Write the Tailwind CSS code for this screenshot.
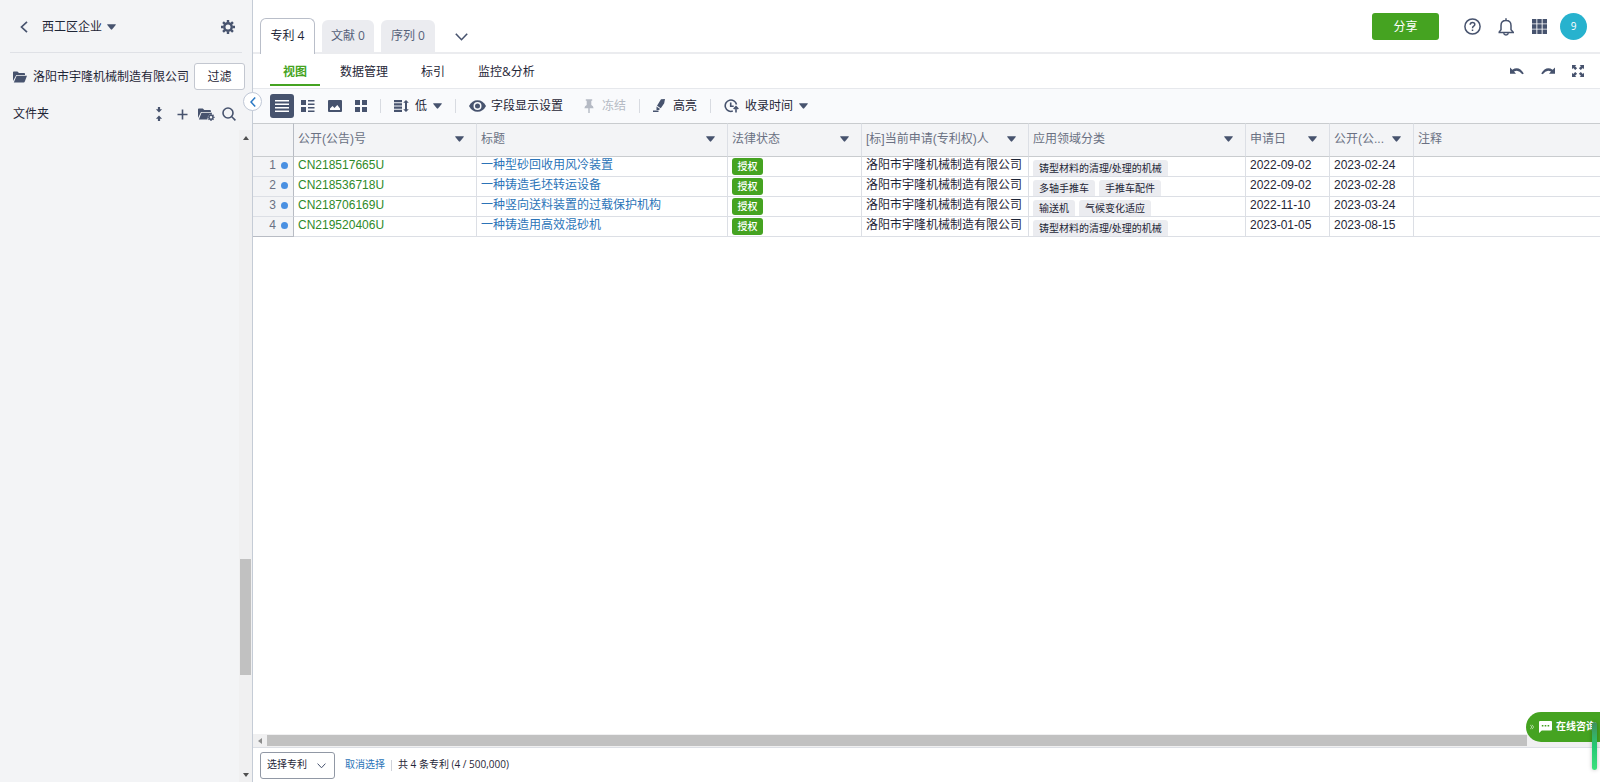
<!DOCTYPE html>
<html lang="zh-CN">
<head>
<meta charset="utf-8">
<title>西工区企业</title>
<script src="https://cdn.jsdelivr.net/npm/@tailwindcss/browser@4"></script>
</head>
<body class="font-['Open_Sans','Noto_Sans_CJK_SC',sans-serif] text-xs text-[#1f2637]">
<svg class="hidden">
  <symbol id="caret" viewBox="0 0 9 6"><path d="M.6.2h7.8q.8.2.3.9L5.2 5.3q-.7.7-1.4 0L.3 1.1Q-.2.4.6.2z" fill="#47536e"/></symbol>
</svg>
<div class="flex h-screen overflow-hidden">

  <aside class="relative flex w-[253px] shrink-0 flex-col border-r border-[#c5ccd6] bg-[#f3f4f6]">
    <header class="mx-[10px] flex h-[53px] shrink-0 items-center border-b border-[#dfe1e6] pt-[2px] pr-[7px] pl-[10px]">
      <button class="mr-[14px]" aria-label="返回"><svg width="8" height="12" viewBox="0 0 8 12" fill="none" stroke="#47536e" stroke-width="1.7"><path d="M7 .8 1.5 6 7 11.2"/></svg></button>
      <button class="flex items-center gap-[5px] leading-4">西工区企业<svg width="9" height="6"><use href="#caret"/></svg></button>
      <button class="ml-auto" aria-label="设置"><svg width="14" height="14" viewBox="0 0 14 14"><circle cx="7" cy="7" r="3.7" fill="none" stroke="#47536e" stroke-width="2.4"/><g stroke="#47536e" stroke-width="2.4"><path d="M7 0v2.6M7 11.4V14M0 7h2.6M11.4 7H14M2.05 2.05l1.8 1.8M10.15 10.15l1.8 1.8M2.05 11.95l1.8-1.8M10.15 3.85l1.8-1.8"/></g></svg></button>
    </header>
    <div class="mt-[10px] flex h-[27px] shrink-0 items-center pr-[7px] pl-[13px]">
      <svg class="mr-[6px] shrink-0" width="14" height="12" viewBox="0 0 14 12" fill="#47536e"><path d="M0 10V1.2Q0 .5.8.5h3.6L6 2h5.2q.8 0 .8.8V4H3.3z"/><path d="M3.6 4.8H14l-2.3 6q-.3.7-1 .7H.8z"/></svg>
      <span class="whitespace-nowrap">洛阳市宇隆机械制造有限公司</span>
      <button class="ml-auto h-[27px] w-[51px] shrink-0 rounded-[3px] border border-[#c3c7d0] bg-white">过滤</button>
    </div>
    <div class="mt-[11px] flex h-[26px] shrink-0 items-center pr-4 pl-[13px]">
      <span class="mr-auto">文件夹</span>
      <button class="mr-[14px]" aria-label="折叠"><svg width="8" height="14" viewBox="0 0 8 14" fill="#47536e"><path d="M2.900 0h2.200v2.300h2L4 5.600l-3.100-3.300h2zM2.900 14h2.200v-2.300h2L4 8.400l-3.100 3.300h2z"/></svg></button>
      <button class="mr-[10px]" aria-label="新建"><svg width="11" height="11" viewBox="0 0 11 11" stroke="#47536e" stroke-width="1.6"><path d="M5.5.5v10M.5 5.5h10"/></svg></button>
      <button class="mr-[7px]" aria-label="文件夹设置"><svg width="17" height="13" viewBox="0 0 17 13"><path d="M0 10V1.3Q0 .5.8.5h4L6.3 2H12q.9 0 .9.8V4H3z" fill="#47536e"/><path d="M3.5 4.8H14v1q-4.6.2-4.6 5.7H.9z" fill="#47536e"/><circle cx="13" cy="9.3" r="2" fill="none" stroke="#47536e" stroke-width="1.5"/><path d="M13 5.7V7M13 11.6v1.3M9.4 9.3h1.3M15.3 9.3h1.3M10.5 6.8l.9.9M14.6 10.9l.9.9M10.5 11.8l.9-.9M14.6 7.7l.9-.9" stroke="#47536e" stroke-width="1.3"/></svg></button>
      <button aria-label="搜索"><svg width="14" height="14" viewBox="0 0 14 14" fill="none" stroke="#47536e" stroke-width="1.6"><circle cx="6" cy="6" r="5"/><path d="m9.8 9.8 3.6 3.6"/></svg></button>
    </div>
    <div class="mt-[3px] flex w-[13px] flex-1 flex-col items-center self-end bg-[#f0f0f1]">
      <svg class="my-[6px]" width="6" height="4"><path d="M0 4 3 0l3 4z" fill="#505050"/></svg>
      <div class="flex-[414]"></div>
      <div class="w-[11px] flex-[117] bg-[#c1c1c1]"></div>
      <div class="flex-[93]"></div>
      <svg class="my-[5px]" width="6" height="4"><path d="M0 0h6L3 4z" fill="#505050"/></svg>
    </div>
    <button class="absolute top-[92px] -right-[10px] z-10 grid size-[19px] place-items-center rounded-full border border-[#c0c8d6] bg-white" aria-label="收起侧栏"><svg width="6" height="10" viewBox="0 0 6 10" fill="none" stroke="#2a78c4" stroke-width="1.5"><path d="M5.2.5 1 5l4.2 4.5"/></svg></button>
  </aside>

  <main class="flex min-w-0 flex-1 flex-col bg-white">
    <header class="flex h-[54px] shrink-0 items-end border-b-2 border-[#ebecef] pr-[13px] pl-[7px]">
      <nav class="flex items-end gap-[7px]">
        <button class="-mb-[2px] h-[36px] w-[55px] rounded-t-[6px] border border-b-0 border-[#b9bec9] bg-white pb-[2px]">专利 4</button>
        <button class="h-8 w-[52px] rounded-t-[6px] bg-[#ebecf0] text-[#56617a]">文献 0</button>
        <button class="h-8 w-[54px] rounded-t-[6px] bg-[#ebecf0] text-[#56617a]">序列 0</button>
        <button class="ml-[13px] pb-[11px]" aria-label="更多"><svg width="13" height="8" viewBox="0 0 13 8" fill="none" stroke="#47536e" stroke-width="1.6"><path d="M.8.8 6.5 6.7 12.2.8"/></svg></button>
      </nav>
      <div class="mb-[12px] ml-auto flex items-center">
        <button class="mr-[25px] h-[27px] w-[67px] rounded-[3px] bg-[#45a321] text-white">分享</button>
        <button class="mr-[17px]" aria-label="帮助"><svg width="17" height="17" viewBox="0 0 17 17" fill="none" stroke="#47536e" stroke-width="1.5"><circle cx="8.5" cy="8.5" r="7.6"/><path d="M6.2 6.8q0-2.3 2.3-2.3t2.3 2q0 1-1.1 1.7T8.5 10.2M8.5 11.4V13"/></svg></button>
        <button class="mr-[18px]" aria-label="通知"><svg width="16" height="18" viewBox="0 0 16 18" fill="none" stroke="#47536e" stroke-width="1.5"><path d="M.5 14.6h15L13 11.7V7.5Q13 2.6 8 2.6T3 7.5v4.2L.9 14.4M8 2.6V.3"/><path d="M5.7 15.2Q6 17 8 17t2.3-1.8" /></svg></button>
        <button class="mr-[13px]" aria-label="应用"><svg width="15" height="15" viewBox="0 0 15 15" fill="#47536e"><path d="M0 0h4.4v4.4H0zM5.3 0h4.4v4.4H5.3zM10.6 0H15v4.4h-4.4zM0 5.3h4.4v4.4H0zM5.3 5.3h4.4v4.4H5.3zM10.6 5.3H15v4.4h-4.4zM0 10.6h4.4V15H0zM5.3 10.6h4.4V15H5.3zM10.6 10.6H15V15h-4.4z"/></svg></button>
        <button class="size-[27px] rounded-full bg-[#27b2ce] text-[10px] text-white">9</button>
      </div>
    </header>

    <div class="flex h-[35px] shrink-0 items-center border-b border-[#e6e8ec] pr-4 pl-[17px]">
      <nav class="flex h-full gap-[7px] pb-[2px]">
        <button class="border-b-2 border-[#45a321] px-[13px] pt-[5px] font-semibold text-[#45a321]">视图</button>
        <button class="border-b-2 border-transparent px-[13px] pt-[5px]">数据管理</button>
        <button class="border-b-2 border-transparent px-[13px] pt-[5px]">标引</button>
        <button class="border-b-2 border-transparent px-[13px] pt-[5px]">监控&amp;分析</button>
      </nav>
      <div class="ml-auto flex items-center gap-[17px]">
        <button aria-label="撤销"><svg width="14" height="8" viewBox="0 0 14 8"><path d="M0 .5v6.300h6L4 4.600Q8.500 2 12.300 7.300l1.500-.9Q9 -1.500 2.300 2.700z" fill="#47536e"/></svg></button>
        <button aria-label="重做"><svg width="14" height="8" viewBox="0 0 14 8"><path d="M14 .5v6.300H8l2-2.200Q5.500 2 1.700 7.300L.2 6.400Q5 -1.500 11.700 2.700z" fill="#47536e"/></svg></button>
        <button aria-label="全屏"><svg width="12" height="12" viewBox="0 0 12 12" fill="#47536e"><path d="M0 0h4.300L3.100 1.200l2 2L3.200 5.100l-2-2L0 4.300zM12 0v4.300l-1.200-1.200-2 2-1.900-1.900 2-2L7.700 0zM0 12V7.700l1.200 1.200 2-2 1.900 1.900-2 2L4.300 12zM12 12H7.700l1.200-1.200-2-2 1.900-1.900 2 2L12 7.700z"/></svg></button>
      </div>
    </div>

    <div class="flex h-[34px] shrink-0 items-center bg-[#f9fafc] pl-[17px] whitespace-nowrap">
      <div class="flex items-center gap-[13px]">
        <button class="-mr-[6px] grid size-6 place-items-center rounded-[3px] bg-[#47536e]" aria-label="列表"><svg width="14" height="12" fill="#fff"><path d="M0 0h14v1.500H0zM0 3.500h14V5H0zM0 7h14v1.500H0zM0 10.500h14V12H0z"/></svg></button>
        <button aria-label="详细列表"><svg width="14" height="12" fill="#47536e"><path d="M0 0h5v5H0zM0 7h5v5H0zM7 0h6.500v1.500H7zM7 3.500h6.500V5H7zM7 7h6.500v1.500H7zM7 10.500h6.500V12H7z"/></svg></button>
        <button aria-label="图片"><svg width="14" height="12" viewBox="0 0 14 12"><rect width="14" height="12" rx="1" fill="#47536e"/><path d="M2 10V8.600L4.500 6l2 2 2.800-3L12 8.500V10z" fill="#fff"/></svg></button>
        <button aria-label="网格"><svg width="12" height="12" fill="#47536e"><path d="M0 0h5v5H0zM7 0h5v5H7zM0 7h5v5H0zM7 7h5v5H7z"/></svg></button>
      </div>
      <span class="mx-[13px] h-[14px] w-px bg-[#d8dbe1]"></span>
      <button class="flex items-center gap-[6px]"><svg width="15" height="12" viewBox="0 0 15 12" fill="#47536e"><path d="M0 0h8v2.200H0zM0 3.300h8v2.200H0zM0 6.600h8v2.200H0zM0 9.800h8V12H0z"/><path d="M11 2.800v6.400H9.200L12 12l2.800-2.800H13V2.800h1.800L12 0 9.200 2.800z"/></svg>低<svg width="9" height="6"><use href="#caret"/></svg></button>
      <span class="mx-[13px] h-[14px] w-px bg-[#d8dbe1]"></span>
      <button class="flex items-center gap-[5px]"><svg width="17" height="12" viewBox="0 0 17 12"><path d="M0 6Q3 .2 8.500.2T17 6q-3 5.800-8.500 5.800T0 6z" fill="#47536e"/><circle cx="8.500" cy="6" r="4" fill="#f9fafc"/><circle cx="8.500" cy="6" r="2.500" fill="#47536e"/></svg>字段显示设置</button>
      <button class="ml-[20px] flex items-center gap-[7px] text-[#b5bac4]" disabled><svg width="12" height="15" viewBox="0 0 12 15" fill="#b5bac4"><path d="M2.800.3h6.400v1.400H8.300V6q2.100.9 2.300 3.200H6.700V14H5.300V9.200H1.400Q1.600 6.900 3.700 6V1.700h-.9z"/></svg>冻结</button>
      <span class="mx-[13px] h-[14px] w-px bg-[#d8dbe1]"></span>
      <button class="flex items-center gap-[7px]"><svg width="13" height="14" viewBox="0 0 13 14" fill="#47536e"><path d="M8 .3 12 0 11.200 4.200 7.800 9.300 4 6.700zM3.500 7.400l3.600 2.500-1.300 1H3.500zM0 11.500h5.500V13H0z"/></svg>高亮</button>
      <span class="mx-[13px] h-[14px] w-px bg-[#d8dbe1]"></span>
      <button class="flex items-center gap-[6px]"><svg width="15" height="14" viewBox="0 0 15 14" fill="none" stroke="#47536e" stroke-width="1.600"><path d="M12.500 5.500A5.700 5.700 0 1 0 8.800 12.100M6.700 3.400v3.800h3M12 13.500V8M9.700 10 12 7.600 14.300 10"/></svg>收录时间<svg width="9" height="6"><use href="#caret"/></svg></button>
    </div>

    <div class="flex-1 overflow-hidden">
      <table class="w-full table-fixed border-separate border-spacing-0 font-['Liberation_Sans','Noto_Sans_CJK_SC',sans-serif] leading-[17px] whitespace-nowrap [&_td]:h-5 [&_td]:border-r [&_td]:border-b [&_td]:border-[#dcdfe5] [&_td]:p-0 [&_td]:pl-1 [&_td]:align-top [&_th]:h-[34px] [&_th]:border-y [&_th]:border-r [&_th]:border-y-[#c9cccf] [&_th]:border-r-[#dcdfe5] [&_th]:bg-[#f3f4f6] [&_th]:p-0 [&_th]:pr-3 [&_th]:pb-[2px] [&_th]:pl-1 [&_th]:text-left [&_th]:font-normal [&_th]:text-[#6a7183]">
        <colgroup><col class="w-[41px]"><col class="w-[183px]"><col class="w-[251px]"><col class="w-[134px]"><col class="w-[167px]"><col class="w-[217px]"><col class="w-[84px]"><col class="w-[84px]"><col></colgroup>
        <thead>
          <tr>
            <th class="border-r-[#b8bcc4]!"></th>
            <th><div class="flex items-center justify-between">公开(公告)号<svg width="9" height="6"><use href="#caret"/></svg></div></th>
            <th><div class="flex items-center justify-between">标题<svg width="9" height="6"><use href="#caret"/></svg></div></th>
            <th><div class="flex items-center justify-between">法律状态<svg width="9" height="6"><use href="#caret"/></svg></div></th>
            <th><div class="flex items-center justify-between">[标]当前申请(专利权)人<svg width="9" height="6"><use href="#caret"/></svg></div></th>
            <th><div class="flex items-center justify-between">应用领域分类<svg width="9" height="6"><use href="#caret"/></svg></div></th>
            <th><div class="flex items-center justify-between">申请日<svg width="9" height="6"><use href="#caret"/></svg></div></th>
            <th><div class="flex items-center justify-between">公开(公...<svg width="9" height="6"><use href="#caret"/></svg></div></th>
            <th class="border-r-0!">注释</th>
          </tr>
        </thead>
        <tbody>
          <tr>
            <td class="border-r-[#b8bcc4]! bg-[#f3f4f6] text-[#6a7183]"><div class="flex items-center justify-end gap-[5px] pr-[5px]">1<i class="size-[7px] rounded-full bg-[#4a90e2]"></i></div></td>
            <td><a href="#" class="text-[#2f8a2a]">CN218517665U</a></td>
            <td><a href="#" class="text-[#2b74b8]">一种型砂回收用风冷装置</a></td>
            <td><div class="mt-px h-[17px] w-[31px] rounded-[3px] bg-[#45a321] text-center text-[10px] font-medium text-white">授权</div></td>
            <td>洛阳市宇隆机械制造有限公司</td>
            <td><div class="flex h-[19px] gap-1 overflow-hidden pt-[3px] text-[10px] leading-[18px]"><span class="h-[18px] rounded-[3px] bg-[#ebecf0] px-[6px]">铸型材料的清理/处理的机械</span></div></td>
            <td>2022-09-02</td><td>2023-02-24</td><td class="border-r-0!"></td>
          </tr>
          <tr>
            <td class="border-r-[#b8bcc4]! bg-[#f3f4f6] text-[#6a7183]"><div class="flex items-center justify-end gap-[5px] pr-[5px]">2<i class="size-[7px] rounded-full bg-[#4a90e2]"></i></div></td>
            <td><a href="#" class="text-[#2f8a2a]">CN218536718U</a></td>
            <td><a href="#" class="text-[#2b74b8]">一种铸造毛坯转运设备</a></td>
            <td><div class="mt-px h-[17px] w-[31px] rounded-[3px] bg-[#45a321] text-center text-[10px] font-medium text-white">授权</div></td>
            <td>洛阳市宇隆机械制造有限公司</td>
            <td><div class="flex h-[19px] gap-1 overflow-hidden pt-[3px] text-[10px] leading-[18px]"><span class="h-[18px] rounded-[3px] bg-[#ebecf0] px-[6px]">多轴手推车</span><span class="h-[18px] rounded-[3px] bg-[#ebecf0] px-[6px]">手推车配件</span></div></td>
            <td>2022-09-02</td><td>2023-02-28</td><td class="border-r-0!"></td>
          </tr>
          <tr>
            <td class="border-r-[#b8bcc4]! bg-[#f3f4f6] text-[#6a7183]"><div class="flex items-center justify-end gap-[5px] pr-[5px]">3<i class="size-[7px] rounded-full bg-[#4a90e2]"></i></div></td>
            <td><a href="#" class="text-[#2f8a2a]">CN218706169U</a></td>
            <td><a href="#" class="text-[#2b74b8]">一种竖向送料装置的过载保护机构</a></td>
            <td><div class="mt-px h-[17px] w-[31px] rounded-[3px] bg-[#45a321] text-center text-[10px] font-medium text-white">授权</div></td>
            <td>洛阳市宇隆机械制造有限公司</td>
            <td><div class="flex h-[19px] gap-1 overflow-hidden pt-[3px] text-[10px] leading-[18px]"><span class="h-[18px] rounded-[3px] bg-[#ebecf0] px-[6px]">输送机</span><span class="h-[18px] rounded-[3px] bg-[#ebecf0] px-[6px]">气候变化适应</span></div></td>
            <td>2022-11-10</td><td>2023-03-24</td><td class="border-r-0!"></td>
          </tr>
          <tr>
            <td class="border-r-[#b8bcc4]! border-b-[#b8bcc4]! bg-[#f3f4f6] text-[#6a7183]"><div class="flex items-center justify-end gap-[5px] pr-[5px]">4<i class="size-[7px] rounded-full bg-[#4a90e2]"></i></div></td>
            <td><a href="#" class="text-[#2f8a2a]">CN219520406U</a></td>
            <td><a href="#" class="text-[#2b74b8]">一种铸造用高效混砂机</a></td>
            <td><div class="mt-px h-[17px] w-[31px] rounded-[3px] bg-[#45a321] text-center text-[10px] font-medium text-white">授权</div></td>
            <td>洛阳市宇隆机械制造有限公司</td>
            <td><div class="flex h-[19px] gap-1 overflow-hidden pt-[3px] text-[10px] leading-[18px]"><span class="h-[18px] rounded-[3px] bg-[#ebecf0] px-[6px]">铸型材料的清理/处理的机械</span></div></td>
            <td>2023-01-05</td><td>2023-08-15</td><td class="border-r-0!"></td>
          </tr>
        </tbody>
      </table>
    </div>

    <div class="flex h-[13px] shrink-0 items-center bg-[#f0f0f1] pr-[73px] pl-[5px]">
      <svg class="mr-[5px]" width="4" height="6"><path d="M4 0v6L0 3z" fill="#8c8c8c"/></svg>
      <div class="h-[11px] flex-1 bg-[#c1c1c1]"></div>
    </div>
    <footer class="flex h-[35px] shrink-0 items-center border-t border-[#dcdfe5] pl-[7px] text-[10px]">
      <div class="relative">
        <select aria-label="选择专利" class="h-[27px] w-[75px] appearance-none rounded-[3px] border border-[#9198a5] bg-white pl-[6px]"><option>选择专利</option></select>
        <svg class="pointer-events-none absolute top-[11px] right-[9px]" width="9" height="6" viewBox="0 0 9 6" fill="none" stroke="#47536e"><path d="M.6.6 4.500 4.800 8.400.6"/></svg>
      </div>
      <a href="#" class="ml-[10px] text-[#2b74b8]">取消选择</a>
      <span class="mx-[6px] h-[11px] w-px bg-[#d0d3da]"></span>
      <span>共 4 条专利 (4 / 500,000)</span>
    </footer>
  </main>
</div>

<button class="fixed right-0 bottom-[40px] flex h-[30px] w-[74px] items-center overflow-hidden rounded-l-full bg-[#45a321] pl-1 text-[10px] font-bold whitespace-nowrap text-white">
  <svg class="mr-[5px] shrink-0" width="4" height="6" viewBox="0 0 4 6" fill="none" stroke="#c9e6bd" stroke-width=".8"><path d="m.3.800 1.500 2.200L.3 5.200M2.100.800l1.500 2.200-1.500 2.200"/></svg>
  <svg class="mr-[4px] shrink-0" width="13" height="12" viewBox="0 0 13 12"><path d="M1 0h11q1 0 1 1v7.500q0 1-1 1H2.800L0 12V1q0-1 1-1z" fill="#fff"/><path d="M2.800 4h1.600v1.500H2.800zM5.700 4h1.600v1.500H5.700zM8.600 4h1.600v1.500H8.600z" fill="#45a321"/></svg>
  在线咨询
</button>
<div class="fixed right-[3px] bottom-[12px] h-[48px] w-[5px] rounded-full bg-linear-to-b from-[#3f8f5c] via-[#22c873] to-[#3de07c] shadow-[0_0_4px_rgba(0,0,0,0.25)]"></div>
</body>
</html>
